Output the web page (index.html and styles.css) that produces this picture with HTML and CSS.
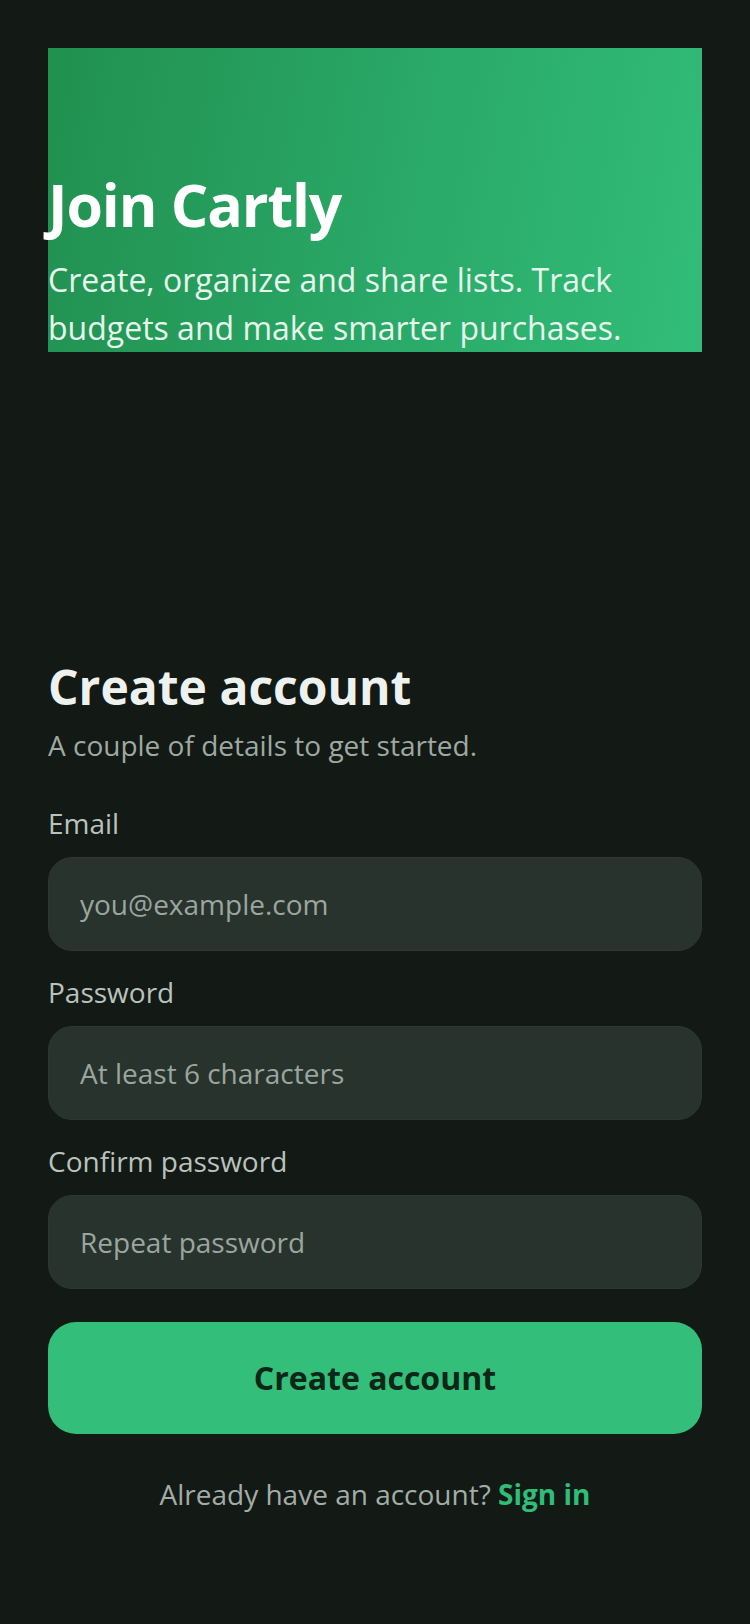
FILE: index.html
```html
<!DOCTYPE html>
<html lang="en">
<head>
<meta charset="utf-8">
<title>Join Cartly</title>
<link rel="stylesheet" href="styles.css">
</head>
<body>
<main class="page">
  <section class="hero">
    <h1 class="hero-title">Join Cartly</h1>
    <p class="hero-text">Create, organize and share lists. Track budgets and make smarter purchases.</p>
  </section>

  <section class="form-card">
    <h2 class="form-title">Create account</h2>
    <p class="form-sub">A couple of details to get started.</p>

    <form class="form">
      <div class="field">
        <label class="label" for="email">Email</label>
        <input class="input" id="email" type="email" placeholder="you@example.com">
      </div>
      <div class="field">
        <label class="label" for="pw">Password</label>
        <input class="input" id="pw" type="password" placeholder="At least 6 characters">
      </div>
      <div class="field">
        <label class="label" for="pw2">Confirm password</label>
        <input class="input" id="pw2" type="password" placeholder="Repeat password">
      </div>
      <button class="btn" type="button">Create account</button>
    </form>

    <p class="alt">Already have an account? <a class="alt-link" href="#">Sign in</a></p>
  </section>
</main>
</body>
</html>
```
FILE: styles.css
```css
* { box-sizing: border-box; }
html, body {
  margin: 0;
  padding: 0;
  background: #131915;
}
body {
  font-family: "Open Sans", "Noto Sans", sans-serif;
  color: #eef2ef;
  min-height: 1624px;
}
.page {
  padding: 48px 48px 0;
}
.hero {
  height: 304px;
  display: flex;
  flex-direction: column;
  justify-content: flex-end;
  background: linear-gradient(100deg, #21904f 0%, #2aa968 55%, #31bd78 100%);
}
.hero-title {
  margin: 0 0 16px;
  font-size: 59px;
  line-height: 1.2;
  font-weight: 700;
  color: #ffffff;
  letter-spacing: -1.1px;
}
.hero-text {
  margin: 0;
  font-size: 32px;
  line-height: 48px;
  color: #e6f6ec;
}
.form-card {
  margin-top: 306px;
}
.form-title {
  margin: 0;
  font-size: 48px;
  line-height: 1.2;
  font-weight: 700;
  color: #eef2ef;
}
.form-sub {
  margin: 8px 0 0;
  font-size: 28px;
  line-height: 42px;
  color: #9ea9a2;
}
.form {
  margin-top: 36px;
  display: flex;
  flex-direction: column;
  gap: 20px;
}
.field {
  display: flex;
  flex-direction: column;
  gap: 13px;
}
.label {
  font-size: 28px;
  line-height: 42px;
  color: #b9c3bd;
}
.input {
  height: 94px;
  border: 1px solid #2d3832;
  border-radius: 24px;
  background: #29332d;
  padding: 0 31px;
  font-family: inherit;
  font-size: 28px;
  color: #eef2ef;
  outline: none;
}
.input::placeholder {
  color: #9aa69f;
  opacity: 1;
}
.btn {
  margin-top: 13px;
  height: 112px;
  border: none;
  border-radius: 28px;
  background: #33be7a;
  color: #0d2617;
  font-family: inherit;
  font-size: 32px;
  font-weight: 700;
}
.alt {
  margin: 39px 0 0;
  text-align: center;
  font-size: 28px;
  line-height: 42px;
  color: #a3ada7;
}
.alt-link {
  color: #2fbd77;
  font-weight: 700;
  text-decoration: none;
}
```
